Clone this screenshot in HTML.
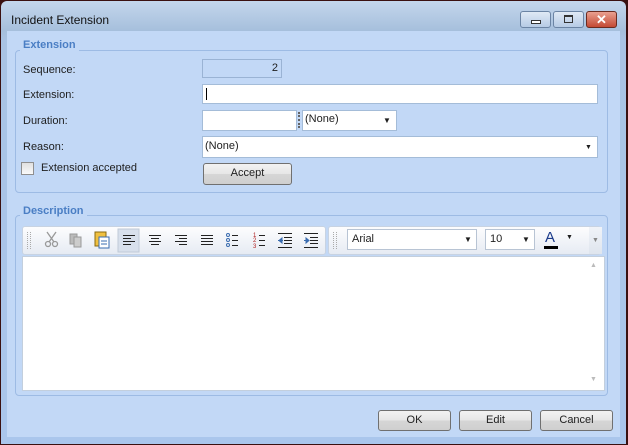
<!DOCTYPE html><html><head><style>
*{margin:0;padding:0;box-sizing:border-box}
body{width:628px;height:445px;overflow:hidden;background:#3a1010;font:11px "Liberation Sans",sans-serif;color:#1e1e1e;position:relative}
.a{position:absolute}
.win{left:1px;top:1px;width:625px;height:443px;background:linear-gradient(#c4d6ec,#a6bfdc 30px,#a9c3e4 40px,#aac6ec);border-radius:6px 6px 0 0}
.client{left:7px;top:31px;width:613px;height:406px;background:#c2d8f6}
.grp{border:1px solid #9dbbe4;border-radius:4px}
.leg{font-weight:bold;color:#4a7ec4;background:#c2d8f6;padding:0 3px}
.box{background:#fff;border:1px solid #a4bcd8}
.btn{border:1px solid #707070;border-radius:3px;background:linear-gradient(#f2f2f2,#e6e6e6 50%,#d6d6d6 51%,#cfcfcf);text-align:center;line-height:19px}
.tb{background:linear-gradient(#fdfdfe,#e6ebf3);border:1px solid #c8d3e2;border-radius:3px}
.wb{border:1px solid #6b84a4;border-radius:3px;background:linear-gradient(#dfe9f5,#b6cbe5)}
</style></head><body>
<div class="a win"></div>
<div class="a" style="left:11px;top:13px;font-size:12px;color:#111">Incident Extension</div>
<div class="a wb" style="left:520px;top:11px;width:31px;height:17px"><div class="a" style="left:10px;top:8px;width:10px;height:4px;border:1px solid #333;background:#fff"></div></div>
<div class="a wb" style="left:553px;top:11px;width:31px;height:17px"><div class="a" style="left:10px;top:3px;width:9px;height:8px;border:1px solid #333;border-top-width:2px"></div></div>
<div class="a" style="left:586px;top:11px;width:31px;height:17px;border:1px solid #6b2b20;border-radius:3px;background:linear-gradient(#e9a090,#c44a34);color:#fff;font-weight:bold;text-align:center;line-height:15px;font-size:13px">✕</div>
<div class="a client"></div>

<div class="a grp" style="left:15px;top:50px;width:593px;height:143px"></div>
<div class="a leg" style="left:20px;top:39px">Extension</div>
<div class="a" style="left:23px;top:64px">Sequence:</div>
<div class="a" style="left:202px;top:59px;width:80px;height:19px;border:1px solid #9ab3d4;text-align:right;padding-right:3px;line-height:17px">2</div>
<div class="a" style="left:23px;top:89px">Extension:</div>
<div class="a box" style="left:202px;top:84px;width:396px;height:20px"><div class="a" style="left:3px;top:3px;width:1px;height:12px;background:#000"></div></div>
<div class="a" style="left:23px;top:115px">Duration:</div>
<div class="a box" style="left:202px;top:110px;width:95px;height:21px"></div>
<div class="a" style="left:298px;top:112px;width:2px;height:16px;border-left:2px dotted #666"></div>
<div class="a box" style="left:302px;top:110px;width:95px;height:21px;padding-left:2px;line-height:17px">(None)<span class="a" style="left:80px;top:1px;font-size:8px">▼</span></div>
<div class="a" style="left:23px;top:141px">Reason:</div>
<div class="a box" style="left:202px;top:136px;width:396px;height:22px;padding-left:2px;line-height:19px">(None)<span class="a" style="left:382px;top:1px;font-size:7px">▼</span></div>
<div class="a" style="left:21px;top:162px;width:13px;height:13px;border:1px solid #8f8f8f;background:linear-gradient(#e0e0e0,#fafafa)"></div>
<div class="a" style="left:41px;top:162px">Extension accepted</div>
<div class="a btn" style="left:203px;top:163px;width:89px;height:22px">Accept</div>

<div class="a grp" style="left:15px;top:215px;width:593px;height:181px"></div>
<div class="a leg" style="left:20px;top:205px">Description</div>
<div class="a" style="left:22px;top:256px;width:583px;height:135px;background:#fff;border:1px solid #c3cfdd"></div>
<div class="a" style="left:590px;top:262px;font-size:7px;color:#bbb">▲</div>
<div class="a" style="left:590px;top:376px;font-size:7px;color:#bbb">▼</div>
<div class="a tb" style="left:22px;top:226px;width:304px;height:29px"></div>
<div class="a tb" style="left:328px;top:226px;width:273px;height:29px"></div>
<div class="a" style="left:589px;top:227px;width:13px;height:27px;background:linear-gradient(#f0f3f8,#dfe5ee);color:#888;font-size:7px;text-align:center;line-height:27px">▼</div>
<div class="a" style="left:27px;top:232px;width:4px;height:17px;border-left:1px dotted #aaa;border-right:1px dotted #aaa"></div>
<div class="a" style="left:333px;top:232px;width:4px;height:17px;border-left:1px dotted #aaa;border-right:1px dotted #aaa"></div>
<svg class="a" style="left:22px;top:226px" width="304" height="29">
<g stroke="#999" fill="none" stroke-width="1.3"><circle cx="26" cy="18" r="2.5"/><circle cx="33" cy="18" r="2.5"/><path d="M27 16 L34 6 M32 16 L25 6"/></g>
<rect x="48" y="8" width="7" height="10" fill="#bbb" stroke="#999"/><rect x="52" y="11" width="7" height="10" fill="#ccc" stroke="#999"/>
<rect x="73" y="6" width="11" height="14" fill="#f0c040" stroke="#8a6a10"/><rect x="77" y="11" width="10" height="11" fill="#fff" stroke="#3a6cb0"/><path d="M79 15h6M79 18h6" stroke="#3a6cb0"/>
<rect x="96" y="3" width="21" height="23" fill="#d8e0ec" stroke="#c0cad8"/>
<g stroke="#222" stroke-width="1"><path d="M101 9.5h12M101 12.5h8M101 15.5h12M101 18.5h8"/><path d="M127 9.5h12M129 12.5h8M127 15.5h12M129 18.5h8"/><path d="M153 9.5h12M157 12.5h8M153 15.5h12M157 18.5h8"/><path d="M179 9.5h12M179 12.5h12M179 15.5h12M179 18.5h12"/>
<path d="M210 9.5h6M210 14.5h6M210 19.5h6"/><path d="M237 9.5h6M237 14.5h6M237 19.5h6"/>
<path d="M256 7.5h14M262 11.5h8M262 14.5h8M262 17.5h8M256 21.5h14"/><path d="M282 7.5h14M288 11.5h8M288 14.5h8M288 17.5h8M282 21.5h14"/></g>
<g fill="none" stroke="#3a6cb0"><circle cx="206" cy="9" r="1.5"/><circle cx="206" cy="14" r="1.5"/><circle cx="206" cy="19" r="1.5"/></g>
<g fill="#b02020" font-size="6" font-family="Liberation Sans"><text x="231" y="11">1</text><text x="231" y="16">2</text><text x="231" y="22">3</text></g>
<path d="M257 14.5l3-2.5v5z M256 14.5h5" stroke="#3a6cb0" fill="#3a6cb0"/><path d="M287 14.5l-3-2.5v5z M282 14.5h5" stroke="#3a6cb0" fill="#3a6cb0"/>
</svg>
<div class="a box" style="left:347px;top:229px;width:130px;height:21px;border-color:#b8c4d4;padding-left:4px;line-height:19px">Arial<span class="a" style="left:116px;font-size:8px">▼</span></div>
<div class="a box" style="left:485px;top:229px;width:50px;height:21px;border-color:#b8c4d4;padding-left:4px;line-height:19px">10<span class="a" style="left:36px;font-size:8px">▼</span></div>
<div class="a" style="left:545px;top:229px;font-size:15px;color:#1a3a8a">A</div>
<div class="a" style="left:544px;top:246px;width:14px;height:3px;background:#000"></div>
<div class="a" style="left:566px;top:234px;font-size:7px">▼</div>

<div class="a btn" style="left:378px;top:410px;width:73px;height:21px">OK</div>
<div class="a btn" style="left:459px;top:410px;width:73px;height:21px">Edit</div>
<div class="a btn" style="left:540px;top:410px;width:73px;height:21px">Cancel</div>
</body></html>
